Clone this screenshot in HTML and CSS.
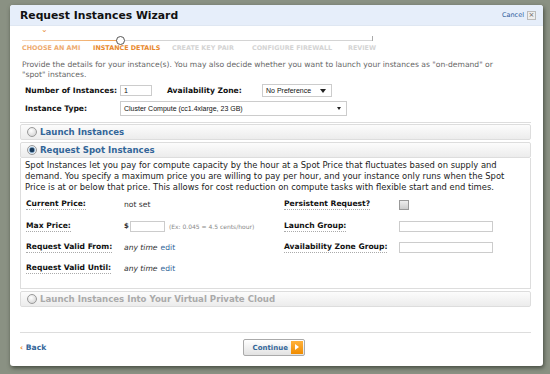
FILE: index.html
```html
<!DOCTYPE html>
<html lang="en">
<head>
    <meta charset="UTF-8">
    <title>Request Instances Wizard</title>
    <link rel="stylesheet" href="styles.css">
</head>
<body>
    <div class="dialog">
        <div class="dialog-header">
            <h1>Request Instances Wizard</h1>
            <a class="cancel" href="#">Cancel <span class="cancel-x">&#215;</span></a>
        </div>
        <div class="dialog-body">
            <div class="stepper">
                <div class="track">
                    <div class="track-done"></div>
                    <div class="track-dot"></div>
                    <div class="track-end"></div>
                    <div class="track-check">&#8964;</div>
                </div>
                <div class="steps">
                    <span class="step done">Choose an AMI</span>
                    <span class="step current">Instance Details</span>
                    <span class="step">Create Key Pair</span>
                    <span class="step">Configure Firewall</span>
                    <span class="step">Review</span>
                </div>
            </div>

            <p class="intro">Provide the details for your instance(s). You may also decide whether you want to launch your instances as "on-demand" or "spot" instances.</p>

            <div class="basics">
                <label class="field-label">Number of Instances:</label>
                <div class="row-inline">
                    <input class="text-input count-input" value="1">
                    <label class="field-label zone-label">Availability Zone:</label>
                    <div class="fake-select zone-select">No Preference <span class="caret"></span></div>
                </div>
                <label class="field-label">Instance Type:</label>
                <div class="fake-select type-select">Cluster Compute (cc1.4xlarge, 23 GB) <span class="caret"></span></div>
            </div>

            <div class="panels">
                <div class="panel-head"><span class="radio"></span>Launch Instances</div>
                <div class="panel-head"><span class="radio checked"></span>Request Spot Instances</div>
                <div class="panel-body">
                    <p class="spot-text">Spot Instances let you pay for compute capacity by the hour at a Spot Price that fluctuates based on supply and demand. You specify a maximum price you are willing to pay per hour, and your instance only runs when the Spot Price is at or below that price. This allows for cost reduction on compute tasks with flexible start and end times.</p>
                    <div class="spot-grid">
                        <div class="spot-row">
                            <span class="dotted">Current Price:</span>
                            <span class="value">not set</span>
                        </div>
                        <div class="spot-row right">
                            <span class="dotted">Persistent Request?</span>
                            <span class="checkbox"></span>
                        </div>
                        <div class="spot-row">
                            <span class="dotted">Max Price:</span>
                            <span class="value"><b>$</b><input class="text-input price-input"><span class="hint">(Ex: 0.045 = 4.5 cents/hour)</span></span>
                        </div>
                        <div class="spot-row right">
                            <span class="dotted">Launch Group:</span>
                            <input class="text-input group-input">
                        </div>
                        <div class="spot-row">
                            <span class="dotted">Request Valid From:</span>
                            <span class="value"><i>any time</i> <a href="#">edit</a></span>
                        </div>
                        <div class="spot-row right">
                            <span class="dotted">Availability Zone Group:</span>
                            <input class="text-input group-input">
                        </div>
                        <div class="spot-row">
                            <span class="dotted">Request Valid Until:</span>
                            <span class="value"><i>any time</i> <a href="#">edit</a></span>
                        </div>
                    </div>
                </div>
                <div class="panel-head disabled"><span class="radio"></span>Launch Instances Into Your Virtual Private Cloud</div>
            </div>

            <div class="footer">
                <a class="back" href="#"><span class="back-arrow">&#8249;</span> Back</a>
                <button class="continue">Continue <span class="continue-icon"></span></button>
            </div>
        </div>
    </div>
</body>
</html>
```

FILE: styles.css
```css
body {
    margin: 0;
    width: 550px;
    height: 374px;
    overflow: hidden;
    background-color: #8a9183;
    font-family: "DejaVu Sans", Verdana, sans-serif;
}
.dialog {
    margin: 5px 0 0 10px;
    width: 533px;
    height: 361px;
    background-color: white;
    border-radius: 3px;
    box-shadow: 1px 2px 4px rgba(40, 45, 35, 0.7);
    overflow: hidden;
}
.dialog-header {
    display: flex;
    align-items: center;
    justify-content: space-between;
    height: 20px;
    padding: 0 7px 0 10px;
    background-color: #e6eefa;
    border-bottom: 1px solid #dfe7f2;
}
.dialog-header h1 {
    margin: 0;
    font-size: 10.8px;
    color: #111;
}
.cancel {
    display: flex;
    align-items: center;
    gap: 3px;
    font-size: 6.5px;
    color: #2d5a9a;
    text-decoration: none;
}
.cancel-x {
    display: inline-block;
    width: 7px;
    height: 7px;
    line-height: 7px;
    text-align: center;
    font-size: 7px;
    color: #666;
    background-color: #eee;
    border: 1px solid #bbb;
}
.dialog-body {
    padding: 0 12px 0 10px;
}
.stepper {
    padding-top: 6px;
}
.track {
    position: relative;
    margin-left: 2px;
    width: 351px;
    height: 9px;
    border-bottom: 1px solid #d4d4d4;
    box-sizing: border-box;
}
.track-done {
    position: absolute;
    left: 0;
    bottom: -1px;
    width: 96px;
    height: 1px;
    background: linear-gradient(to right, #f6d9bd, #f0a050);
}
.track-dot {
    position: absolute;
    left: 94px;
    top: 4px;
    width: 7px;
    height: 7px;
    border: 1px solid #555;
    border-radius: 50%;
    background-color: white;
}
.track-end {
    position: absolute;
    right: 0;
    top: 4px;
    width: 1px;
    height: 5px;
    background-color: #aaa;
}
.track-check {
    position: absolute;
    left: 19px;
    top: -7px;
    font-size: 8px;
    color: #e8903a;
}
.steps {
    display: grid;
    grid-template-columns: 71px 79px 80px 96px auto;
    margin: 3px 0 0 2px;
}
.step {
    font-size: 6.4px;
    font-weight: bold;
    text-transform: uppercase;
    color: #d4d4d4;
    white-space: nowrap;
}
.step.done {
    color: #eeab70;
}
.step.current {
    color: #e8892e;
}
.intro {
    margin: 8px 0 0 2px;
    width: 480px;
    font-size: 7.6px;
    line-height: 10px;
    color: #666;
}
.basics {
    display: grid;
    grid-template-columns: 95px auto;
    row-gap: 4px;
    align-items: center;
    margin: 4px 0 0 5px;
}
.field-label, .dotted {
    font-size: 7.6px;
    font-weight: bold;
    color: #111;
}
.row-inline {
    display: flex;
    align-items: center;
}
.zone-label {
    margin-left: 15px;
    width: 95px;
}
.text-input {
    height: 11px;
    padding: 0 3px;
    border: 1px solid #ccc;
    box-sizing: border-box;
    font-family: "Liberation Sans", Arial, sans-serif;
    font-size: 7px;
    color: #111;
}
.count-input {
    width: 32px;
}
.fake-select {
    display: flex;
    align-items: center;
    justify-content: space-between;
    height: 13px;
    padding: 0 5px 0 3px;
    border: 1px solid #ccc;
    box-sizing: border-box;
    font-family: "Liberation Sans", Arial, sans-serif;
    font-size: 7px;
    color: #111;
}
.zone-select {
    width: 70px;
}
.type-select {
    width: 227px;
    height: 15px;
}
.caret {
    width: 0;
    height: 0;
    border-left: 3px solid transparent;
    border-right: 3px solid transparent;
    border-top: 4px solid #222;
}
.type-select .caret {
    border-left-width: 2px;
    border-right-width: 2px;
    border-top-width: 3px;
}
.panels {
    margin-top: 6px;
    padding-top: 1px;
    border-top: 1px solid #ddd;
    display: flex;
    flex-direction: column;
    gap: 2px;
}
.panel-head {
    display: flex;
    align-items: center;
    gap: 3px;
    height: 16px;
    padding-left: 6px;
    border: 1px solid #ddd;
    border-radius: 2px;
    box-sizing: border-box;
    background: linear-gradient(to bottom, #fcfcfc, #ececec);
    font-size: 8.6px;
    font-weight: bold;
    color: #336699;
}
.panel-head.disabled {
    color: #aaa;
}
.radio {
    width: 8px;
    height: 8px;
    border: 1px solid #999;
    border-radius: 50%;
    background: radial-gradient(circle at 40% 35%, #fff, #ccc);
}
.radio.checked {
    background: radial-gradient(circle, #1a3a5a 0 2px, #7aa0c0 2.5px, #e4ecf4 3.5px);
}
.panel-body {
    margin-top: -2px;
    height: 131px;
    border: 1px solid #ddd;
    border-top: none;
    box-sizing: border-box;
    padding: 2px 4px 0 4px;
}
.spot-text {
    margin: 0;
    width: 494px;
    font-size: 8.4px;
    line-height: 11px;
    color: #222;
}
.spot-grid {
    display: grid;
    grid-template-columns: 258px auto;
    grid-auto-rows: 21.4px;
    align-items: center;
    margin: 1px 0 0 1px;
}
.spot-row {
    display: grid;
    grid-template-columns: 98px auto;
    align-items: center;
}
.spot-row.right {
    grid-template-columns: 115px auto;
}
.dotted {
    justify-self: start;
    border-bottom: 1px dotted #aaa;
    line-height: 10px;
}
.value {
    display: flex;
    align-items: center;
    font-size: 7.6px;
    color: #333;
}
.value i {
    margin-right: 3px;
}
.value a {
    color: #336699;
    text-decoration: none;
}
.value b {
    font-size: 7px;
}
.price-input {
    width: 35px;
    margin-left: 1px;
}
.hint {
    margin-left: 4px;
    font-size: 6px;
    color: #888;
}
.checkbox {
    width: 10px;
    height: 10px;
    border: 1px solid #999;
    box-sizing: border-box;
    background: linear-gradient(to bottom, #eee, #ccc);
}
.group-input {
    width: 94px;
}
.footer {
    display: grid;
    grid-template-columns: 1fr auto 1fr;
    align-items: center;
    margin-top: 25px;
    padding-top: 6px;
    border-top: 1px solid #ddd;
}
.back {
    font-size: 7.6px;
    font-weight: bold;
    color: #336699;
    text-decoration: none;
}
.back-arrow {
    color: #e8892e;
}
.continue {
    display: flex;
    align-items: center;
    justify-content: space-between;
    height: 17px;
    width: 62px;
    padding: 0 1px 0 9px;
    border: 1px solid #aaa;
    border-radius: 2px;
    background: linear-gradient(to bottom, #fff, #e2e2e2);
    font-family: "DejaVu Sans", Verdana, sans-serif;
    font-size: 7px;
    font-weight: bold;
    color: #336699;
    margin-left: -4px;
}
.continue-icon {
    position: relative;
    flex-shrink: 0;
    width: 12px;
    height: 13px;
    background: linear-gradient(to bottom, #ffb23c, #f08c00);
}
.continue-icon::after {
    content: "";
    position: absolute;
    left: 4px;
    top: 3px;
    border-top: 3.5px solid transparent;
    border-bottom: 3.5px solid transparent;
    border-left: 4px solid white;
}
```
